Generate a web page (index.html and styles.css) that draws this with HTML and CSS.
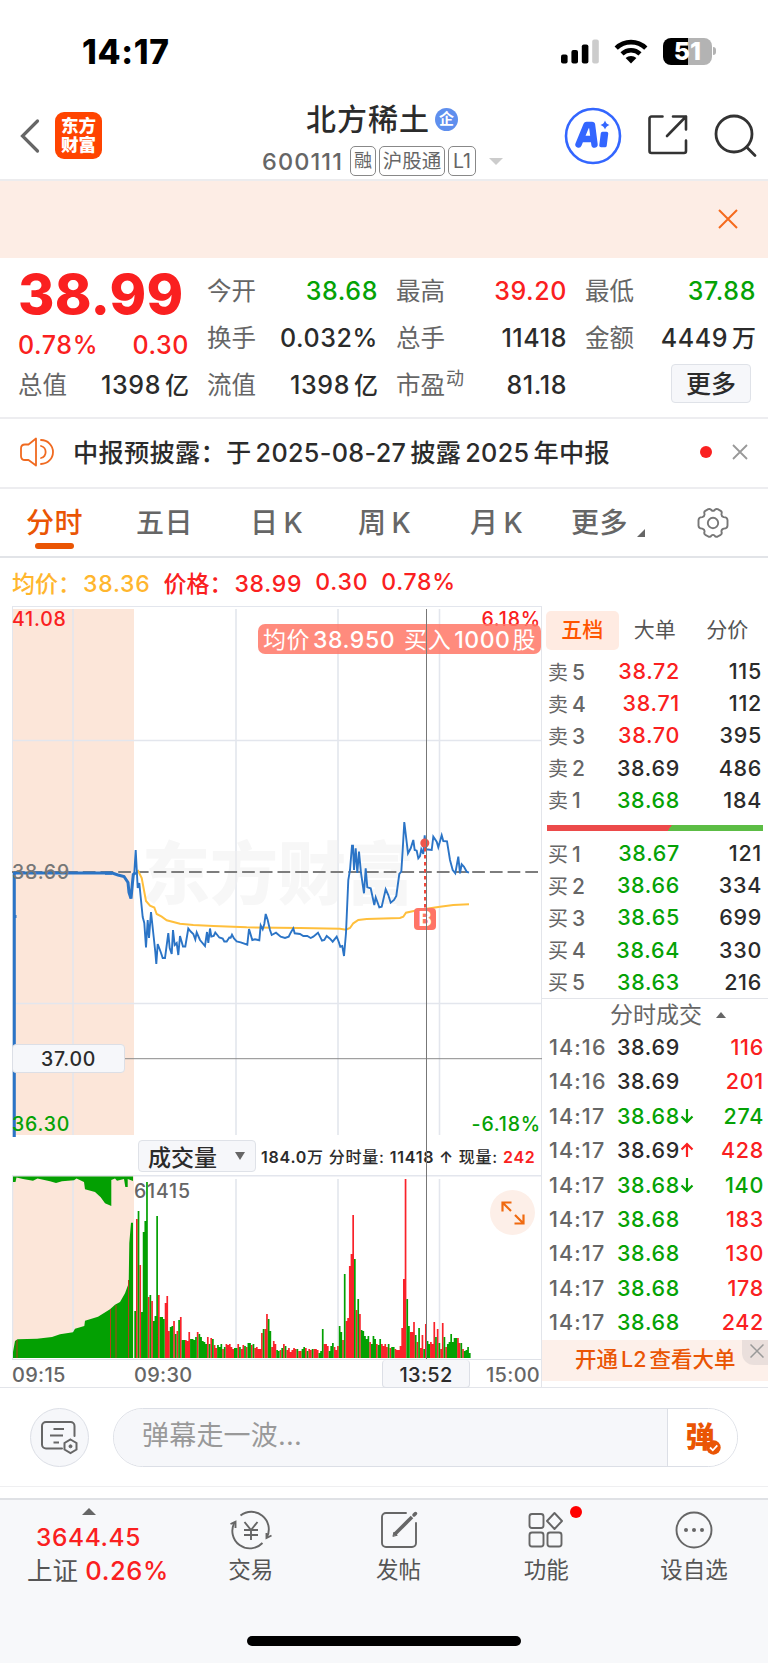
FILE: index.html
```html
<!DOCTYPE html>
<html lang="zh-CN">
<head>
    <meta charset="UTF-8">
    <meta name="viewport" content="width=device-width, initial-scale=1.0">
    <title>北方稀土 600111</title>
    <link rel="stylesheet" href="styles.css">
</head>
<body>

<div class="status">
    <span class="clock">14:17</span>
    <div class="status-icons">
        <svg class="signal" width="39" height="25" viewBox="0 0 39 25">
            <rect x="0" y="15.5" width="6.6" height="9" rx="2"/>
            <rect x="10.4" y="11" width="6.6" height="13.5" rx="2"/>
            <rect x="20.8" y="5.5" width="6.6" height="19" rx="2"/>
            <rect x="31.2" y="0.5" width="6.6" height="24" rx="2" fill="#ccc"/>
        </svg>
        <svg class="wifi" width="34" height="25" viewBox="0 0 34 25">
            <path d="M2.2 9.2a21 21 0 0 1 29.6 0" fill="none" stroke="#000" stroke-width="4.6"/>
            <path d="M8 14.8a13 13 0 0 1 18 0" fill="none" stroke="#000" stroke-width="4.4"/>
            <path d="M17 24.5l-5.4-5.4a7.8 7.8 0 0 1 10.8 0z"/>
        </svg>
        <div class="battery"><span>51</span></div>
        <i class="nub"></i>
    </div>
</div>

<div class="header">
    <svg class="back" width="20" height="36" viewBox="0 0 20 36"><path d="M17.500 3L2.500 18l15 15" fill="none" stroke="#666" stroke-width="3.2" stroke-linecap="round"/></svg>
    <div class="logo">东方<br>财富</div>
    <div class="title">
        <h1>北方稀土<span class="qi">企</span></h1>
        <div class="code">
            <span class="num">600111</span>
            <span class="tag rong">融</span>
            <span class="tag hgt">沪股通</span>
            <span class="tag l1">L1</span>
            <i class="caret"></i>
        </div>
    </div>
    <div class="actions">
        <div class="ai">
            <svg width="58" height="58" viewBox="0 0 58 58">
                <circle cx="29" cy="29" r="27" fill="none" stroke="#36f" stroke-width="2.6"/>
                <path d="M14.500 37.500L22.500 18h5.500L30.500 37.500M18.500 32h11" fill="none" stroke="#36f" stroke-width="6.400" stroke-linejoin="round" stroke-linecap="round"/>
                <path d="M38.500 26.500h4L41 38.500h-4z" fill="#36f" stroke="#36f" stroke-width="3.500" stroke-linejoin="round"/>
                <path d="M41 13.500q1 3.500 4.500 4.500q-3.500 1-4.500 4.500q-1-3.500-4.500-4.500q3.500-1 4.500-4.500z" fill="#36f"/>
            </svg>
        </div>
        <svg class="share" width="42" height="42" viewBox="0 0 42 42" fill="none" stroke="#333" stroke-width="2.6" stroke-linecap="round" stroke-linejoin="round">
            <path d="M15.500 2.500H4.500a2 2 0 0 0-2 2V37a2 2 0 0 0 2 2H37a2 2 0 0 0 2-2V26.500"/>
            <path d="M26 2.500h13v13M39 2.500L20 22"/>
        </svg>
        <svg class="find" width="44" height="44" viewBox="0 0 44 44" fill="none" stroke="#333" stroke-width="2.8" stroke-linecap="round">
            <circle cx="20" cy="20" r="18"/><path d="M32.500 33l8.500 8.500"/>
        </svg>
    </div>
</div>

<div class="banner">
    <svg width="20" height="20" viewBox="0 0 20 20"><path d="M1 1l18 18M19 1L1 19" stroke="#f56a1d" stroke-width="2"/></svg>
</div>

<div class="quote">
    <div class="price">38.99</div>
    <div class="cell"><span>今开</span><b class="green">38.68</b></div>
    <div class="cell"><span>最高</span><b class="red">39.20</b></div>
    <div class="cell"><span>最低</span><b class="green">37.88</b></div>
    <div class="cell low"><b class="red">0.78%</b><b class="red">0.30</b></div>
    <div class="cell"><span>换手</span><b>0.032%</b></div>
    <div class="cell"><span>总手</span><b>11418</b></div>
    <div class="cell"><span>金额</span><b>4449<em>万</em></b></div>
    <div class="cell"><span>总值</span><b>1398<em>亿</em></b></div>
    <div class="cell"><span>流值</span><b>1398<em>亿</em></b></div>
    <div class="cell"><span>市盈<sup>动</sup></span><b>81.18</b></div>
    <div class="cell end"><button class="more">更多</button></div>
</div>

<div class="notice">
    <svg class="horn" width="35" height="30" viewBox="0 0 35 30" fill="none" stroke="#f06a20" stroke-width="1.8" stroke-linejoin="round" stroke-linecap="round">
        <path d="M16 1.500v27L8.500 23H5q-4 0-4-4v-7.500q0-4 4-4h3.500z"/>
        <path d="M21 3a12 12 0 0 1 0 24M21 9a6.200 6.200 0 0 1 0 12"/>
    </svg>
    <p>中报预披露：<span>于</span><i>2025-08-27</i>披露<i>2025</i>年中报</p>
    <span class="dot"></span>
    <svg class="x" width="16" height="16" viewBox="0 0 16 16"><path d="M1 1l14 14M15 1L1 15" stroke="#999" stroke-width="1.8"/></svg>
</div>

<div class="tabs">
    <span class="on">分时</span>
    <span>五日</span>
    <span>日<i>K</i></span>
    <span>周<i>K</i></span>
    <span>月<i>K</i></span>
    <span class="gd">更多</span>
    <svg width="34" height="34" viewBox="0 0 34 34" fill="none" stroke="#777" stroke-width="1.9" stroke-linejoin="round">
        <path d="M12.300 3.200q2.100-.8 3 .8q1.700 1.700 3.400 0q.9-1.600 3-.8l3 1.700q1.600 1 .8 3q-.4 2.400 2.200 3.200q3.600-.1 3.800 2.900v5.700q-.2 3-3.800 2.900q-2.600.8-2.200 3.200q.8 2-.8 3l-3 1.700q-2.100.8-3-.8q-1.700-1.700-3.400 0q-.9 1.600-3 .8l-3-1.700q-1.600-1-.8-3q.4-2.400-2.200-3.200q-3.600.1-3.800-2.900V14q.2-3 3.800-2.900q2.600-.8 2.200-3.200q-.8-2 .8-3z"/>
        <circle cx="17" cy="17" r="5.200"/>
    </svg>
</div>

<div class="legend">
    <span class="avg">均价：<b>38.36</b></span>
    <span>价格：<b>38.99</b></span>
    <b>0.30</b>
    <b>0.78%</b>
</div>

<div class="main">
    <div class="chart">
        <div class="plot">
            <svg id="price" width="530" height="531" viewBox="12 606 530 531">
                <rect x="13" y="609" width="121" height="526" fill="#fce6d9"/>
                <g stroke="#e3e6ed" stroke-width="1.6">
                    <path d="M12 606.500H542" stroke-width="1"/>
                    <path d="M12.500 606V1137" stroke-width="1"/>
                    <path d="M73 609V1135M236 609V1135M338 609V1135M439.500 609V1135"/>
                    <path d="M12 740.500H542M12 1003.500H542"/>
                </g>
                <text class="mark" x="142" y="899">东方财富</text>
                <path d="M12 872H538" stroke="#7d7d7d" stroke-width="2.200" stroke-dasharray="12.700 5"/>
                <path d="M125 1058.700H542" stroke="#8a8a8a"/>
                <path id="avg" fill="none" stroke="#ffbf3c" stroke-width="2"/>
                <path d="M14.300 1137V872M14 873H112" fill="none" stroke="#2b74c6" stroke-width="3"/>
                <path d="M13 916.500h3.500M105 873.300h8l5 1.700l6 1.500l4 6l1 10l2 6l1.300-14l1-10l2.500-2" fill="none" stroke="#2b74c6" stroke-width="3"/>
                <path id="line" fill="none" stroke="#2b74c6" stroke-width="1.900"/>
                <path d="M425 848V908" stroke="#f4473a" stroke-width="2" stroke-dasharray="3.500 3.500"/>
                <circle cx="424.800" cy="843" r="4.500" fill="#ee564c"/>
                <rect x="414" y="908" width="22" height="22" rx="4" fill="#ff7466"/>
                <text class="buy" x="425" y="926">B</text>
            </svg>
            <span class="lab top-l">41.08</span>
            <span class="lab top-r">6.18%</span>
            <span class="lab mid-l">38.69</span>
            <span class="lab bot-l">36.30</span>
            <span class="lab bot-r">-6.18%</span>
            <span class="level">37.00</span>
            <div class="tip">均价<b>38.950</b> 买入<b>1000</b>股</div>
        </div>
        <div class="toolbar">
            <div class="pick">成交量<i></i></div>
            <p><b>184.0</b>万 分时量: <b>11418 ↑</b> 现量: <b class="red">242</b></p>
        </div>
        <div class="plot">
            <svg id="volume" width="530" height="184" viewBox="12 1175 530 184">
                <rect x="13" y="1176" width="121" height="182" fill="#fce6d9"/>
                <g stroke="#e3e6ed" stroke-width="1.600">
                    <path d="M12 1175.800H542M12.500 1176V1359"/>
                    <path d="M73 1179V1358M236 1179V1358M338 1179V1358M439.500 1179V1358"/>
                </g>
                <path id="auction" fill="#03a002"/>
                <path d="M17 1340V1358M110.500 1309V1358M116 1305V1358M128.500 1280V1358" stroke="#b0401c"/>
                <path id="up" fill="#f9222a"/>
                <path id="down" fill="#03a002"/>
            </svg>
            <span class="lab vol">61415</span>
            <div class="expand">
                <svg width="24" height="24" viewBox="0 0 24 24" fill="none" stroke="#f06a10" stroke-width="2.200"><path d="M1.500 10.500v-9h9M1.500 1.500l8.500 8.500M22.500 13.500v9h-9M22.500 22.500L14 14"/></svg>
            </div>
        </div>
        <div class="axis">
            <span>09:15</span>
            <span>09:30</span>
            <span class="now">13:52</span>
            <span>15:00</span>
        </div>
        <i class="cross"></i>
    </div>

    <div class="side">
        <div class="side-tabs"><span class="on">五档</span><span>大单</span><span>分价</span></div>
        <div class="book">
            <div><span>卖<i>5</i></span><b class="red">38.72</b><b>115</b></div>
            <div><span>卖<i>4</i></span><b class="red">38.71</b><b>112</b></div>
            <div><span>卖<i>3</i></span><b class="red">38.70</b><b>395</b></div>
            <div><span>卖<i>2</i></span><b>38.69</b><b>486</b></div>
            <div><span>卖<i>1</i></span><b class="green">38.68</b><b>184</b></div>
        </div>
        <div class="ratio"></div>
        <div class="book">
            <div><span>买<i>1</i></span><b class="green">38.67</b><b>121</b></div>
            <div><span>买<i>2</i></span><b class="green">38.66</b><b>334</b></div>
            <div><span>买<i>3</i></span><b class="green">38.65</b><b>699</b></div>
            <div><span>买<i>4</i></span><b class="green">38.64</b><b>330</b></div>
            <div><span>买<i>5</i></span><b class="green">38.63</b><b>216</b></div>
        </div>
        <div class="deal-title">分时成交<i></i></div>
        <div class="deals">
            <div><span>14:16</span><b>38.69</b><b class="red">116</b></div>
            <div><span>14:16</span><b>38.69</b><b class="red">201</b></div>
            <div><span>14:17</span><b class="green">38.68<svg class="arr" viewBox="0 0 14 16"><path d="M7 1v13M1.500 8.500L7 14l5.500-5.500"/></svg></b><b class="green">274</b></div>
            <div><span>14:17</span><b>38.69<svg class="arr red" viewBox="0 0 14 16"><path d="M7 15V2M1.500 7.500L7 2l5.500 5.500"/></svg></b><b class="red">428</b></div>
            <div><span>14:17</span><b class="green">38.68<svg class="arr" viewBox="0 0 14 16"><path d="M7 1v13M1.500 8.500L7 14l5.500-5.500"/></svg></b><b class="green">140</b></div>
            <div><span>14:17</span><b class="green">38.68</b><b class="red">183</b></div>
            <div><span>14:17</span><b class="green">38.68</b><b class="red">130</b></div>
            <div><span>14:17</span><b class="green">38.68</b><b class="red">178</b></div>
            <div><span>14:17</span><b class="green">38.68</b><b class="red">242</b></div>
        </div>
        <div class="l2">开通<i>L2</i>查看大单
            <span><svg width="14" height="14" viewBox="0 0 14 14"><path d="M.5 .5l13 13M13.500 .5l-13 13" stroke="#999" stroke-width="1.500"/></svg></span>
        </div>
    </div>
</div>

<div class="danmu">
    <div class="round">
        <svg width="38" height="34" viewBox="0 0 38 34" fill="none" stroke="#666" stroke-width="2">
            <path d="M33.500 15V5a4 4 0 0 0-4-4H5a4 4 0 0 0-4 4v18.500a4 4 0 0 0 4 4h16" stroke-linecap="round"/>
            <path d="M12.500 8H23M9 14.500h13M12.500 21.500h5.500"/>
            <path d="M29.500 18.500l6 3.500v6.500l-6 3.500l-6-3.500V22z"/>
            <circle cx="29.500" cy="25.300" r="1.500" fill="#666" stroke-width="1"/>
        </svg>
    </div>
    <div class="field">
        <input type="text" placeholder="弹幕走一波..." spellcheck="false">
        <button>弹<svg width="15" height="15" viewBox="0 0 15 15"><circle cx="7.500" cy="7.500" r="7.200" fill="#ea5504"/><path d="M4 7.500l2.800 2.800l4.500-5" fill="none" stroke="#fff" stroke-width="1.800"/></svg></button>
    </div>
</div>

<div class="bottom">
    <div class="index">
        <i></i>
        <b class="red">3644.45</b>
        <p>上证 <b class="red">0.26%</b></p>
    </div>
    <div class="item">
        <svg width="44" height="40" viewBox="0 0 44 40" fill="none" stroke="#666" stroke-width="1.900">
            <path d="M11.500 5.500A17.500 17.500 0 0 1 38 27M33.500 33A17.500 17.500 0 0 1 5.500 12.500"/>
            <path d="M1.500 14l5-2.200V18M42.500 25.500L37.500 28v-5"/>
            <path d="M15.500 12l6.500 8l6.500-8M22 20v10M15 20h14M15 25h14"/>
        </svg>
        <span>交易</span>
    </div>
    <div class="item">
        <svg width="40" height="40" viewBox="0 0 40 40" fill="none" stroke="#666" stroke-width="1.900" stroke-linecap="round">
            <path d="M27 3H7a4 4 0 0 0-4 4v26a4 4 0 0 0 4 4h26a4 4 0 0 0 4-4V13"/>
            <path d="M15.500 24.500L33 7" stroke-width="3.600" stroke-linecap="butt"/><path d="M14 26l1-4l3 3z" fill="#666" stroke-width="1"/><path d="M35 5l1.500-1.500" stroke-width="3.500"/>
        </svg>
        <span>发帖</span>
    </div>
    <div class="item">
        <svg width="40" height="40" viewBox="0 0 40 40" fill="none" stroke="#666" stroke-width="1.900" stroke-linejoin="round">
            <rect x="3.500" y="4" width="14" height="14" rx="2.500"/><rect x="3.500" y="22.500" width="14" height="14" rx="2.500"/><rect x="21.500" y="22.500" width="14" height="14" rx="2.500"/>
            <path d="M28.500 3l7.500 8l-7.500 8l-7.500-8z"/>
        </svg>
        <em></em>
        <span>功能</span>
    </div>
    <div class="item">
        <svg width="40" height="40" viewBox="0 0 40 40" fill="none" stroke="#666" stroke-width="1.900">
            <circle cx="20" cy="20" r="17.500"/>
            <g fill="#666" stroke="none"><circle cx="12" cy="20" r="2"/><circle cx="20" cy="20" r="2"/><circle cx="28" cy="20" r="2"/></g>
        </svg>
        <span>设自选</span>
    </div>
    <div class="home"></div>
</div>

<script src="script.js"></script>
</body>
</html>
```
FILE: styles.css
```css
*{
    margin: 0;
    padding: 0;
    box-sizing: border-box;
    font-family: Inter, 'Noto Sans CJK SC', sans-serif;
}

body{
    width: 768px;
    background: #fff;
    color: #2b2b2b;
    overflow-x: hidden;
}

b, i, em{
    font-style: normal;
    font-weight: 500;
}

.red{
    color: #fa2020;
}

.green{
    color: #05a205;
}

svg{
    display: block;
    flex: none;
}

/* status bar */
.status{
    height: 92px;
    padding: 10px 52px 0 82px;
    display: flex;
    justify-content: space-between;
    align-items: flex-start;
}

.clock{
    font-size: 33.5px;
    font-weight: 800;
    line-height: 40px;
    letter-spacing: .7px;
    color: #000;
    margin-top: 22px;
}

.status-icons{
    display: flex;
    align-items: center;
    margin-top: 27px;
    height: 28px;
}

.wifi{
    margin: 0 15px 0 14px;
}

.battery{
    width: 49px;
    height: 27px;
    border-radius: 8px;
    background: linear-gradient(90deg, #000 51%, #b3b3b3 51%);
    text-align: center;
}

.battery span{
    color: #fff;
    font-size: 25px;
    font-weight: 800;
    line-height: 27px;
    display: block;
}

.nub{
    width: 3px;
    height: 8px;
    margin-left: 1px;
    border-radius: 0 4px 4px 0;
    background: #b3b3b3;
}

/* header */
.header{
    height: 89px;
    border-bottom: 2px solid #ececee;
    display: flex;
    padding-left: 20px;
}

.back{
    margin-top: 26px;
}

.logo{
    width: 47px;
    height: 47px;
    margin: 20px 0 0 15px;
    border-radius: 9px;
    background: #ff4400;
    color: #fff;
    font-size: 17.5px;
    font-weight: 900;
    line-height: 19px;
    text-align: center;
    padding-top: 4px;
}

.title{
    width: 260px;
    margin-left: 154px;
    padding-top: 6px;
}

.title h1{
    font-size: 30px;
    font-weight: 500;
    letter-spacing: 1px;
    line-height: 40px;
    height: 42px;
    display: flex;
    align-items: center;
    padding-left: 50px;
}

.qi{
    width: 23px;
    height: 23px;
    border-radius: 50%;
    background: #5f8fee;
    color: #fff;
    font-size: 15px;
    font-weight: 700;
    line-height: 22px;
    letter-spacing: 0;
    text-align: center;
    margin-left: 5px;
}

.code{
    display: flex;
    align-items: center;
    height: 42px;
    padding-left: 6px;
    color: #666;
}

.code .num{
    width: 88px;
    font-size: 23.5px;
    font-weight: 500;
    letter-spacing: 1.1px;
}

.tag{
    height: 30px;
    border: 1.5px solid #888;
    border-radius: 5px;
    font-size: 19.5px;
    line-height: 28px;
    text-align: center;
    margin-right: 3px;
}

.rong{
    width: 26px;
    font-size: 18px;
}

.hgt{
    width: 66px;
}

.l1{
    width: 28px;
}

.caret{
    border: 7px solid transparent;
    border-top-color: #ccc;
    border-bottom: 0;
    margin-left: 10px;
}

.actions{
    display: flex;
    margin-left: 48px;
}

.ai{
    margin-top: 15px;
}

.share{
    margin: 22px 0 0 25px;
}

.find{
    margin: 22px 0 0 25px;
}

.banner{
    height: 77px;
    background: #fdede5;
    display: flex;
    justify-content: flex-end;
    padding: 28px 30px 0 0;
}

/* quote */
.quote{
    height: 161px;
    padding: 10px 14px 0 18px;
    border-bottom: 2px solid #ededf0;
    display: grid;
    grid-template-columns: repeat(4, 169px);
    grid-template-rows: repeat(3, 47px);
    column-gap: 20px;
}

.price{
    font-size: 55.5px;
    font-weight: 800;
    line-height: 52px;
    letter-spacing: .2px;
    color: #fa2020;
}

.cell{
    display: flex;
    justify-content: space-between;
    align-items: center;
    font-size: 25px;
    height: 46px;
    white-space: nowrap;
}

.cell b{
    font-weight: 540;
    letter-spacing: .6px;
    margin-right: -2px;
}

.cell.low{
    padding-top: 14px;
}

.cell span{
    font-size: 24.5px;
    color: #666;
    margin-top: -3px;
}

.cell sup{
    font-size: 18px;
    line-height: 0;
    vertical-align: 9px;
    margin-left: 1px;
}

.cell em{
    font-size: 24px;
    line-height: 1;
    margin-left: 4px;
    letter-spacing: 0;
}

.cell.end{
    justify-content: flex-end;
    padding-right: 3px;
}

.more{
    width: 80px;
    height: 39px;
    border: 1.5px solid #dfe2e8;
    border-radius: 4px;
    background: #f6f7fa;
    font-size: 25px;
    font-weight: 500;
    line-height: 32px;
    color: #2b2b2b;
    margin-top: -3px;
}

/* notice */
.notice{
    height: 70px;
    border-bottom: 2px solid #ededf0;
    display: flex;
    align-items: center;
    padding: 0 20px 2px 20px;
}

.notice p{
    flex: 1;
    margin: -2px 0 0 18px;
    font-size: 25.2px;
    font-weight: 500;
    letter-spacing: .32px;
    white-space: nowrap;
}

.notice p i{
    margin: 0 4px;
}

.dot{
    width: 12px;
    height: 12px;
    border-radius: 50%;
    background: #fa2020;
    margin-right: 20px;
}

/* tabs */
.tabs{
    height: 69px;
    border-bottom: 2px solid #e2e4e8;
    display: grid;
    grid-template-columns: 110px 114px 108px 112px 101px 125px 34px;
    align-items: center;
    padding-left: 26px;
    font-size: 28px;
    font-weight: 500;
    color: #666;
}

.tabs span{
    position: relative;
    margin-top: -4px;
    letter-spacing: .5px;
    white-space: nowrap;
}

.tabs span i{
    margin-left: 5px;
}

.tabs .on{
    color: #ea5504;
}

.tabs .on::after{
    content: "";
    position: absolute;
    left: 9px;
    bottom: -8px;
    width: 39px;
    height: 6px;
    border-radius: 3px;
    background: #ea5504;
}

.tabs .gd::after{
    content: "";
    position: absolute;
    left: 66px;
    bottom: 4px;
    border: 4.5px solid #666;
    border-top-color: transparent;
    border-left-color: transparent;
}

/* legend */
.legend{
    height: 48px;
    display: flex;
    align-items: center;
    padding: 0 0 1px 12px;
    font-size: 23px;
    font-weight: 500;
    color: #fa2020;
    white-space: nowrap;
}

.legend span, .legend b{
    margin-right: 13px;
}

.legend b{
    letter-spacing: .75px;
}

.legend span b{
    margin-right: 0;
    margin-left: 2px;
}

.legend .avg{
    color: #ffb62e;
}

/* chart */
.main{
    display: flex;
    height: 782px;
    border-bottom: 1.5px solid #e3e5ea;
}

.chart{
    position: relative;
    width: 530px;
    margin-left: 12px;
    border-right: 1.5px solid #e3e5ea;
}

.plot{
    position: relative;
}

.mark{
    font-size: 68px;
    font-weight: 900;
    fill: #f0f0f0;
    opacity: .5;
}

.buy{
    font-size: 20px;
    font-weight: 700;
    fill: #fff;
    text-anchor: middle;
}

.lab{
    position: absolute;
    font-size: 19.5px;
    font-weight: 500;
    line-height: 22px;
    letter-spacing: .8px;
}

.top-l{
    left: 0;
    top: 2px;
    color: #fa2020;
}

.top-r{
    right: 0;
    top: 2px;
    color: #fa2020;
}

.mid-l{
    left: 0;
    top: 255px;
    color: #777;
}

.bot-l{
    left: 0;
    top: 507px;
    color: #05a205;
}

.bot-r{
    right: 0;
    top: 507px;
    color: #05a205;
}

.level{
    position: absolute;
    left: 0;
    top: 438px;
    width: 113px;
    height: 29px;
    border: 1.5px solid #dcdfe6;
    border-radius: 4px;
    background: #f6f7fa;
    font-size: 19.5px;
    font-weight: 500;
    line-height: 28px;
    letter-spacing: .7px;
    text-align: center;
}

.tip{
    position: absolute;
    right: 0;
    top: 18px;
    width: 283px;
    height: 30px;
    border-radius: 7px;
    background: rgba(255, 120, 104, .86);
    color: #fff;
    font-size: 23px;
    line-height: 32px;
    letter-spacing: .55px;
    text-align: center;
    white-space: nowrap;
}

.tip b{
    margin: 0 2px 0 3px;
}

.toolbar{
    height: 38px;
    display: flex;
    align-items: center;
    padding-left: 126px;
}

.pick{
    width: 118px;
    height: 32px;
    border: 1.5px solid #dfe2e8;
    border-radius: 4px;
    background: #f6f7fa;
    font-size: 23px;
    font-weight: 500;
    display: flex;
    align-items: center;
    padding-left: 9px;
}

.pick i{
    border: 5px solid transparent;
    border-top: 8px solid #666;
    border-bottom: 0;
    margin-left: 18px;
}

.toolbar p{
    font-size: 16px;
    font-weight: 500;
    letter-spacing: .75px;
    margin-left: 5px;
    white-space: nowrap;
}

.toolbar b{
    font-weight: 600;
}

.vol{
    left: 122px;
    top: 5px;
    color: #666;
}

.expand{
    position: absolute;
    right: 6px;
    top: 15px;
    width: 45px;
    height: 45px;
    border-radius: 50%;
    background: #fdefe8;
    display: flex;
    align-items: center;
    justify-content: center;
}

.axis{
    display: flex;
    height: 28px;
    border-top: 1.500px solid #dfe2e8;
    font-size: 20px;
    line-height: 30px;
    font-weight: 500;
    letter-spacing: .3px;
    color: #666;
}

.axis span{
    width: 122px;
}

.axis .now{
    width: 88px;
    height: 28px;
    margin: 0 16px 0 126px;
    border: 1.500px solid #dcdfe6;
    border-top: 0;
    border-radius: 4px;
    background: #f6f7fa;
    color: #2b2b2b;
    text-align: center;
}

.axis span:last-child{
    width: auto;
}

.cross{
    position: absolute;
    left: 414px;
    top: 3px;
    width: 1px;
    height: 750px;
    background: #777;
}

/* order book */
.side{
    width: 226px;
}

.side-tabs{
    display: flex;
    height: 49px;
    padding: 5px 0 5px 4px;
    font-size: 21px;
    color: #555;
}

.side-tabs span{
    width: 72.500px;
    line-height: 38px;
    text-align: center;
    border-radius: 5px;
}

.side-tabs .on{
    background: #ffebe2;
    color: #ff5500;
    font-weight: 500;
}

.book div, .deals div{
    display: grid;
    grid-template-columns: 58px 74px 1fr;
    align-items: center;
    height: 32.2px;
    padding: 0 6px 0 6px;
    font-size: 21.500px;
    text-align: right;
}

.book b, .deals b{
    font-weight: 550;
    letter-spacing: .7px;
}

.book span, .deals span{
    text-align: left;
    color: #666;
    font-size: 20px;
    white-space: nowrap;
}

.book i{
    margin-left: 4px;
    font-size: 21px;
}

.ratio{
    height: 6px;
    margin: 9px 5px 6px 5px;
    background: linear-gradient(125deg, #ec4a4a 56.6%, #5cbd45 56.8%);
}

.deal-title{
    height: 32px;
    border-top: 1.500px solid #e3e5ea;
    font-size: 23px;
    line-height: 32px;
    color: #666;
    display: flex;
    align-items: center;
    justify-content: center;
    padding: 2px 0 0 26px;
}

.deal-title i{
    border: 5px solid transparent;
    border-bottom: 6px solid #666;
    border-top: 0;
    margin-left: 14px;
}

.deals div{
    height: 34.4px;
    padding: 0 4px 0 7px;
    grid-template-columns: 58px 73px 1fr;
}

.deals div b{
    position: relative;
}

.deals span{
    font-weight: 500;
    font-size: 21.500px;
    letter-spacing: 1.1px;
}

.arr{
    position: absolute;
    left: 100%;
    top: 5px;
    width: 14px;
    height: 16px;
    fill: none;
    stroke: currentColor;
    stroke-width: 2.200;
}

.l2{
    position: relative;
    height: 41px;
    margin-top: 1px;
    background: #fdf0ea;
    color: #ea5504;
    font-size: 21.500px;
    font-weight: 500;
    line-height: 38px;
    padding-left: 33px;
}

.l2 i{
    margin: 0 3px;
}

.l2 span{
    position: absolute;
    right: 0;
    top: 0;
    width: 26px;
    height: 25px;
    border-bottom-left-radius: 12px;
    background: #eadfdc;
    padding: 4px 0 0 8px;
}

/* comment bar */
.danmu{
    height: 99px;
    border-bottom: 1px solid #efeff1;
    display: flex;
    align-items: flex-start;
    padding: 20px 30px 0;
}

.round{
    width: 59px;
    height: 59px;
    border: 1.500px solid #dcdfe6;
    border-radius: 50%;
    background: #f6f7fa;
    display: flex;
    align-items: center;
    justify-content: center;
}

.field{
    flex: 1;
    height: 59px;
    margin-left: 24px;
    border: 1.500px solid #dcdfe6;
    border-radius: 30px;
    display: flex;
    overflow: hidden;
}

.field input{
    flex: 1;
    border: 0;
    outline: none;
    background: #f6f7fa;
    font-size: 27px;
    letter-spacing: .2px;
    padding: 0 0 5px 28px;
}

.field input::placeholder{
    color: #999;
}

.field button{
    position: relative;
    width: 70px;
    border: 0;
    border-left: 1.500px solid #dcdfe6;
    background: #fff;
    color: #ea5504;
    font-size: 29px;
    font-weight: 900;
    line-height: 50px;
    padding-right: 5px;
}

.field button svg{
    position: absolute;
    left: 38px;
    top: 31px;
}

/* bottom bar */
.bottom{
    position: relative;
    height: 165px;
    margin-top: 11px;
    border-top: 2px solid #dfe1e5;
    background: #f7f8fa;
    display: flex;
}

.index{
    width: 177px;
    font-size: 24.500px;
    line-height: 34px;
    text-align: center;
    padding: 8px 0 0 0;
}

.index b{
    letter-spacing: .6px;
}

.index i{
    display: block;
    width: 14px;
    margin: 0 auto;
    border: 7px solid transparent;
    border-top: 0;
    border-bottom-color: #666;
}

.index > b{
    display: block;
    margin-top: 5px;
}

.index p{
    color: #555;
    font-size: 25.500px;
    padding-left: 19px;
    white-space: nowrap;
}

.item{
    position: relative;
    width: 147.700px;
    font-size: 22.500px;
    color: #555;
    display: flex;
    flex-direction: column;
    align-items: center;
    padding-top: 10px;
}

.item span{
    line-height: 34px;
    margin-top: 3px;
}

.item em{
    position: absolute;
    left: 98px;
    top: 6px;
    width: 12px;
    height: 12px;
    border-radius: 50%;
    background: #ff0000;
}

.home{
    position: absolute;
    left: 247px;
    bottom: 17px;
    width: 274px;
    height: 10px;
    border-radius: 5px;
    background: #000;
}
```
FILE: script.js
```js
const line = [
    [134.3,873],[135.7,850],[137.7,888],[139.3,883],[142.7,917],[144.3,923],[146,947.500],[147.7,920],[149,938],[151,912],
    [153.7,937],[155.3,952],[156.3,964],[157.7,944],[160.7,952],[162.7,958],[165,958],[168.3,933],[169.7,948],[171.7,954],
    [173,930],[174.7,945],[176.7,943],[178.3,955],[180,936],[183,946.500],[185.3,946.500],[188.3,928.500],[190.7,931.500],[193.3,934],
    [195.3,939.500],[196.7,932.500],[200,940],[205,946],[207,932],[208.3,943],[210,928.500],[211.3,936.500],[213.7,936],[215.3,932.500],
    [219.3,937.500],[222.7,938.500],[224.3,941.500],[226.7,941.500],[229.3,937.500],[230.7,937.700],[232,934.700],[234,938.500],[236.7,941.300],[240.7,942.300],
    [247.3,944.700],[249,929],[252.3,940],[255,939.300],[259.3,940.300],[260.7,925.300],[262.7,929.300],[264.3,924],[265.7,914],[267.7,920],
    [270,930],[271.7,935],[276,932.700],[280.7,936.700],[285,938],[288.7,936.700],[290.7,932.700],[293.3,928.300],[294.7,933.300],[300,934],
    [303.3,936],[307.3,936],[310.7,938],[313.3,936.700],[318,932.700],[322,940.700],[324.3,940],[326.7,936],[330,938.700],[332.7,941.700],
    [336.7,936.700],[338.7,941.700],[340.3,946.700],[342.3,946],[344,956],[346,933],[348.3,880],[350,870],[352,845.700],[353,845.700],
    [354,870],[355.7,848.300],[357.3,873],[359,851.700],[361,873],[364,893.300],[365.7,868.300],[367.3,887.300],[370.7,888.300],[374.3,905],
    [375.7,897.300],[379.3,907.300],[381.7,906.700],[385.7,889.300],[388.3,895],[390.7,902.700],[394,900],[396.3,896],[399.3,874],[401.3,871.700],
    [402.7,850],[404.3,822],[408,853.300],[410.7,848.300],[413.3,840],[414.7,850],[416.7,850.700],[418.3,858.300],[420,856],[421.3,849.300],
    [423.3,854],[424.7,835.300],[426,849.300],[431.7,850],[433.3,836.700],[436.7,841.700],[438.3,847.300],[441.7,835.300],[443.3,841],[447,841.300],
    [450,860],[452.7,870],[455.3,873.300],[458.3,856.700],[460,873.300],[461.7,864.300],[464,866.700],[466.7,871.700],[469,872.700]
];

const avg = [
    [137.7,870],[141.7,878],[146,901],[150,905.700],[154.3,907.500],[156.7,914],[161.7,916.700],[166.7,920.300],[180,923.700],[193.3,925],
    [213.3,926],[246.7,927.300],[300,928],[340,928.700],[346,929.700],[350,928],[353.3,923.300],[358.3,920],[366.7,919],[400,918],
    [403.3,916.700],[406,912.700],[415,910.700],[423.3,909.300],[440,906.700],[453.3,905],[469,904.300]
];

// one bar per minute from 09:30, minus = falling
const bars = [
    -47,139,-147,93,-46,-126,-137,-176,61,-63,57,-37,-42,-142,63,-41,-41,-39,55,62,
    27,-31,-32,37,-24,27,-38,41,-18,-18,18,17,26,-19,-19,-18,-21,26,-24,-21,
    -17,-16,-14,21,-14,20,-19,13,10,-13,-11,-14,9,-11,14,13,14,11,9,-10,
    -10,14,-11,9,13,-12,11,-15,-15,13,-14,10,11,9,9,25,-29,29,44,-39,
    -27,11,17,14,-8,-7,8,-10,14,-12,8,10,6,8,10,9,-9,7,7,-9,
    -11,10,-7,9,8,-9,9,9,8,-5,-7,-29,14,14,12,-7,-12,-15,11,8,
    12,-32,-26,18,-84,37,40,92,104,143,-99,48,-59,44,-28,-27,-22,-19,-22,16,
    -14,-22,-19,14,-13,-19,14,12,14,11,-14,10,-11,-11,9,8,8,12,30,79,
    179,-59,-32,26,26,36,-23,16,-30,10,23,-9,34,-17,-14,16,14,36,-21,29,
    -15,9,35,-21,11,-14,-16,-24,-16,-20,-20,20,15,-15,9,-7,-8,-11,-5
];

const auctionLow = [
    [13,1358],[13,1352],[15,1341],[17.500,1339.300],[37,1338.700],[52,1337],[60,1334.300],[73,1332.300],[75,1328.700],[84.300,1326],
    [85,1320.700],[98,1316.700],[110,1309.300],[115,1304.700],[120,1302],[125,1293.300],[128.700,1283.300],[129.300,1243],[131,1222.700],[133,1222.700],[133,1358]
];

const auctionTop = [
    [13,1176.500],[13,1182],[15.500,1182],[16.500,1177.500],[23,1179],[33,1180.700],[37.500,1178.500],[50,1181.300],[56,1183],[62,1181.300],
    [74,1180.300],[76.500,1178.500],[84,1182],[85,1189.300],[95,1192],[100.700,1197.300],[105,1203.300],[111.300,1206],[111.300,1180],[115,1178.500],
    [117,1180.700],[124,1179],[125.300,1187],[127.700,1187],[127.700,1179],[133,1181],[133,1176.500]
];

function path(points){
    return "M" + points.map(p => p.join(" ")).join("L");
}

document.querySelector("#line").setAttribute("d", path(line));
document.querySelector("#avg").setAttribute("d", path(avg));
document.querySelector("#auction").setAttribute("d", path(auctionLow) + "Z" + path(auctionTop) + "Z");

let up = "";
let down = "";
bars.forEach((v, i) => {
    const x = (134.3 + i * 1.69).toFixed(2);
    const bar = `M${x} 1358v${-Math.abs(v)}h1.7v${Math.abs(v)}z`;
    if(v > 0){
        up += bar;
    }else{
        down += bar;
    }
});
document.querySelector("#up").setAttribute("d", up);
document.querySelector("#down").setAttribute("d", down);
```
